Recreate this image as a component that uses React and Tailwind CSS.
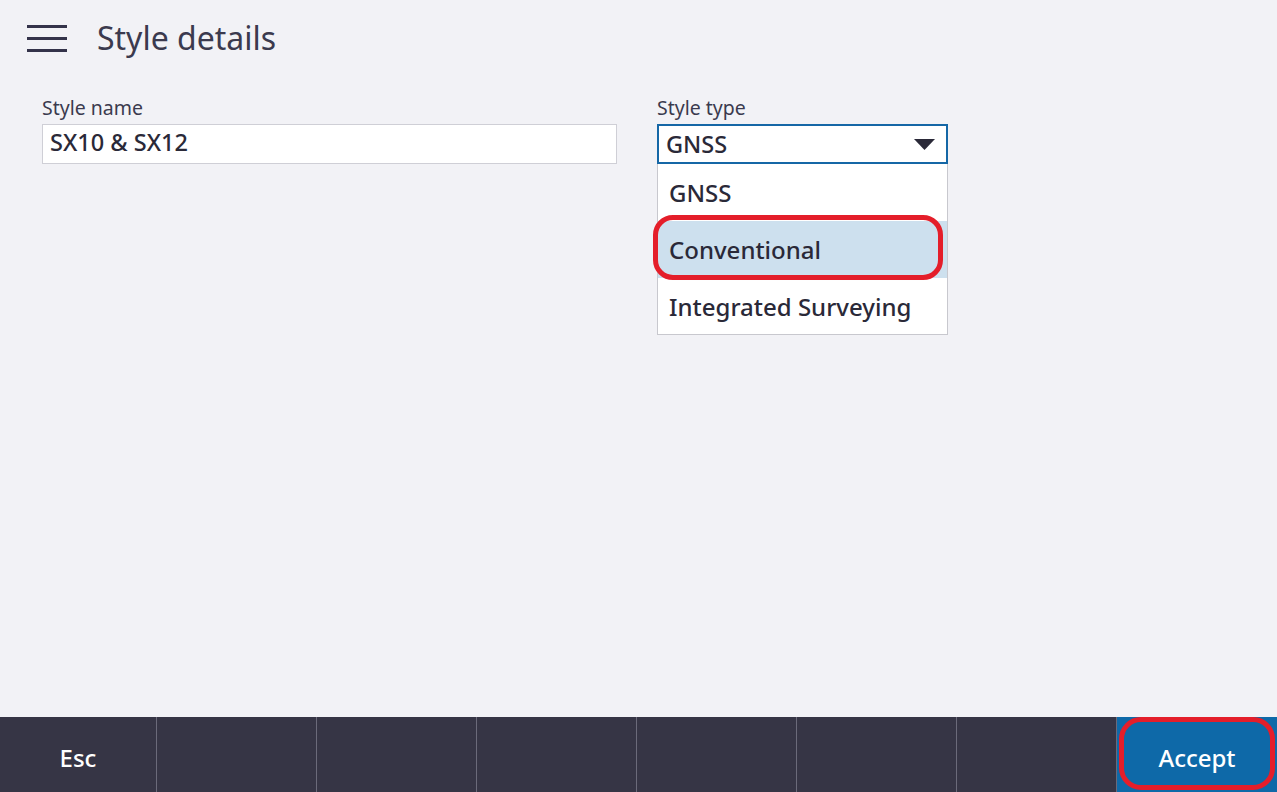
import React from "react";

export default function App() {
  const font = { fontFamily: '"Noto Sans", "Open Sans", sans-serif' };
  return (
    <div style={font} className="w-full h-[792px] flex flex-col bg-[#f2f2f6] text-[#2f2e40] overflow-hidden">
      <header className="h-[76px] flex items-center pl-[27px]">
        <div className="flex flex-col gap-[9px] w-[40px]">
          <span className="block h-[3px] bg-[#34334a]"></span>
          <span className="block h-[3px] bg-[#34334a]"></span>
          <span className="block h-[3px] bg-[#34334a]"></span>
        </div>
        <h1 className="ml-[30px] text-[32px] leading-none text-[#3b3a4e] -mt-[1px]">Style details</h1>
      </header>

      <main className="flex-1 flex pl-[42px] pt-[16px]">
        <div className="w-[575px] flex flex-col">
          <label className="text-[19.5px] leading-[32px] text-[#3b3a4e]">Style name</label>
          <div className="h-[40px] bg-white border border-[#cfcfd6] flex items-center pl-[7px]">
            <span className="text-[23.5px] font-[550] text-[#2a2938] -mt-[3px]">SX10 &amp; SX12</span>
          </div>
        </div>

        <div className="ml-[40px] w-[291px] flex flex-col relative">
          <label className="text-[19.5px] leading-[32px] text-[#3b3a4e]">Style type</label>
          <div className="h-[40px] bg-white border-2 border-[#1567a6] flex items-center pl-[7px] pr-[11px] justify-between">
            <span className="text-[23.5px] font-[550] text-[#2a2938] mt-[1px]">GNSS</span>
            <svg width="21" height="11" viewBox="0 0 21 11">
              <polygon points="0,0 21,0 10.5,11" fill="#2a2938" />
            </svg>
          </div>
          <div className="absolute left-0 top-[72px] w-[291px] bg-white border border-t-0 border-[#c8c8ce]">
            <div className="h-[57px] flex items-center pl-[11px] pt-[1px] text-[24px] font-[550] text-[#2a2938]">GNSS</div>
            <div className="h-[57px] flex items-center pl-[11px] pt-[1px] text-[24px] font-[550] text-[#2a2938] bg-[#cde0ee] relative">
              Conventional
              <div className="absolute left-[-5px] top-[-6px] w-[290px] h-[65px] border-[5px] border-[#e41e2a] rounded-[20px]"></div>
            </div>
            <div className="h-[56px] flex items-center pl-[11px] pt-[2px] text-[24px] font-[550] text-[#2a2938]">Integrated Surveying</div>
          </div>
        </div>
      </main>

      <footer className="h-[75px] flex bg-[#363545]">
        <div className="w-[156px] flex items-center justify-center text-white text-[24px] font-[550] pt-[6px]">Esc</div>
        <div className="w-[160px] border-l border-[#6b6a7a]"></div>
        <div className="w-[160px] border-l border-[#6b6a7a]"></div>
        <div className="w-[160px] border-l border-[#6b6a7a]"></div>
        <div className="w-[160px] border-l border-[#6b6a7a]"></div>
        <div className="w-[160px] border-l border-[#6b6a7a]"></div>
        <div className="w-[160px] border-l border-[#6b6a7a]"></div>
        <div className="flex-1 border-l border-[#6b6a7a] bg-[#0e69a8] relative flex items-center justify-center text-white text-[24px] font-[550] pt-[6px]">
          Accept
          <div className="absolute left-[2px] top-[0px] right-[2px] bottom-[2px] border-[5px] border-[#e41e2a] rounded-[22px]"></div>
        </div>
      </footer>
    </div>
  );
}
